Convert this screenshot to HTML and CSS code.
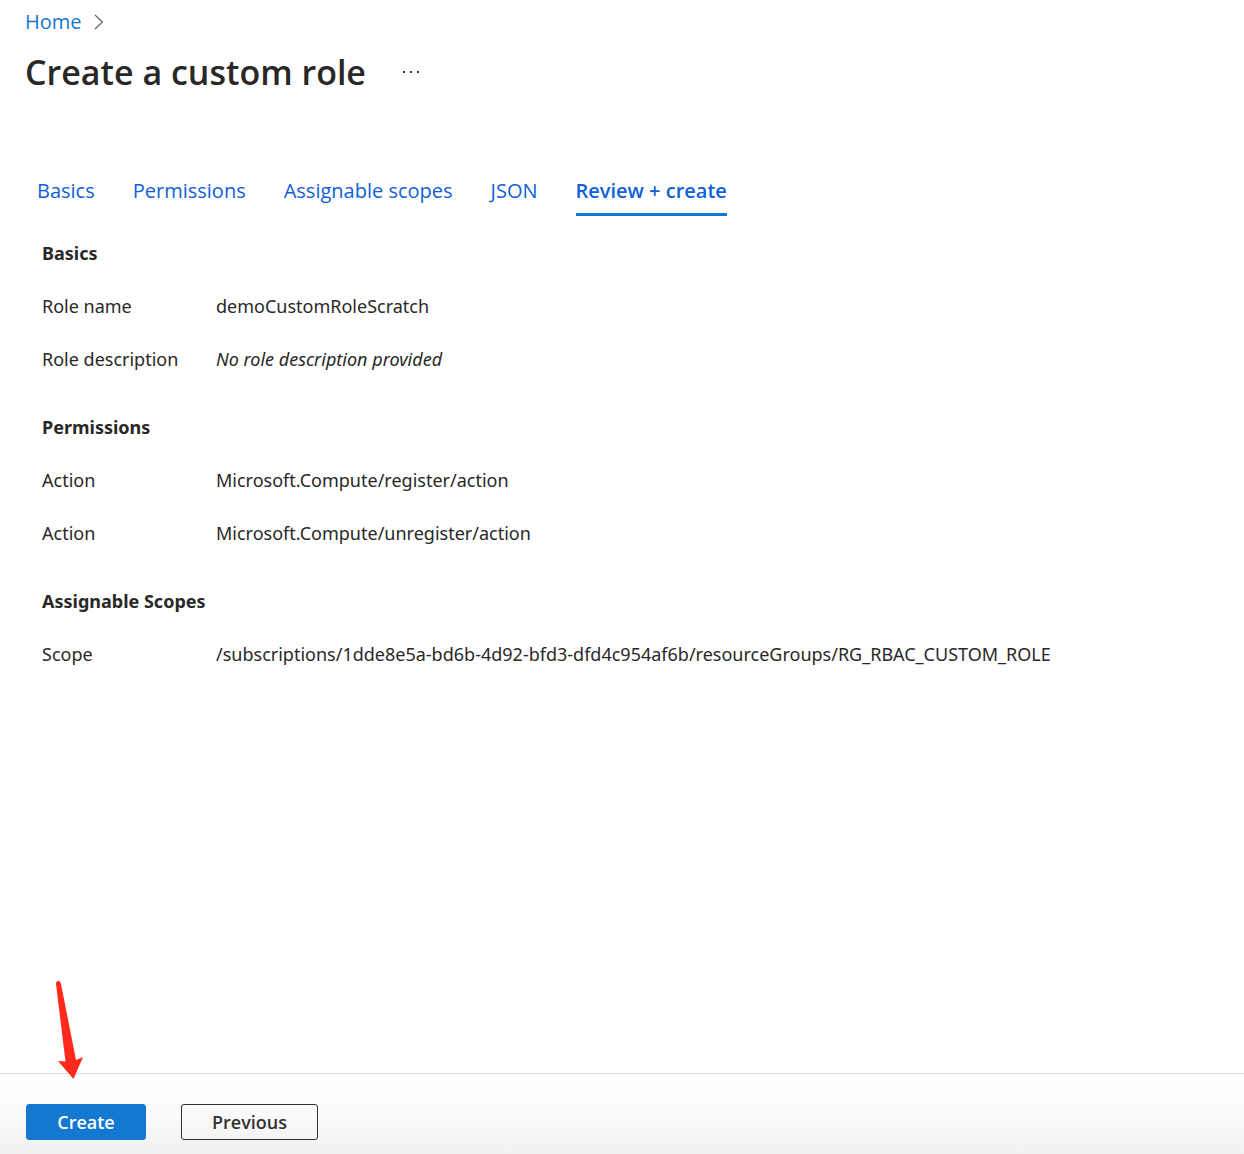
FILE: index.html
```html
<!DOCTYPE html>
<html lang="en">
<head>
<meta charset="utf-8">
<meta name="viewport" content="width=device-width, initial-scale=1">
<title>Create a custom role</title>
<link rel="stylesheet" href="styles.css">
</head>
<body>
<div class="page">
  <header class="header">
    <nav class="breadcrumb" aria-label="Breadcrumb">
      <a class="breadcrumb-link" href="#">Home</a>
      <svg class="chevron" width="10" height="16" viewBox="0 0 10 16" aria-hidden="true"><path d="M1 1L8.500 8L1 15" fill="none" stroke="#605e5c" stroke-width="1.100"/></svg>
    </nav>
    <div class="title-row">
      <h1 class="title">Create a custom role</h1>
      <button class="more" type="button" aria-label="More options">
        <svg width="18" height="4" viewBox="0 0 18 4" aria-hidden="true"><path d="M1 1h2v2h-2zM8 1h2v2h-2zM15 1h2v2h-2z" fill="#323130"/></svg>
      </button>
    </div>
  </header>
  <nav class="tabs" aria-label="Steps">
    <a class="tab" href="#">Basics</a>
    <a class="tab" href="#">Permissions</a>
    <a class="tab" href="#">Assignable scopes</a>
    <a class="tab" href="#">JSON</a>
    <a class="tab tab-active" href="#" aria-current="step">Review + create</a>
  </nav>
  <main class="summary">
    <section class="section">
      <h2 class="section-title">Basics</h2>
      <dl class="fields">
        <dt>Role name</dt><dd>demoCustomRoleScratch</dd>
        <dt>Role description</dt><dd class="empty">No role description provided</dd>
      </dl>
    </section>
    <section class="section">
      <h2 class="section-title">Permissions</h2>
      <dl class="fields">
        <dt>Action</dt><dd>Microsoft.Compute/register/action</dd>
        <dt>Action</dt><dd>Microsoft.Compute/unregister/action</dd>
      </dl>
    </section>
    <section class="section">
      <h2 class="section-title">Assignable Scopes</h2>
      <dl class="fields">
        <dt>Scope</dt><dd>/subscriptions/1dde8e5a-bd6b-4d92-bfd3-dfd4c954af6b/resourceGroups/RG_RBAC_CUSTOM_ROLE</dd>
      </dl>
    </section>
  </main>
  <footer class="footer">
    <button class="button button-primary" type="button">Create</button>
    <button class="button" type="button">Previous</button>
    <svg class="arrow" width="28" height="100" viewBox="0 0 28 100" aria-hidden="true"><path d="M1 4Q1 1 3.500 1Q5.500 1 6 4L21 80L28 77L18.500 99L3 81L10.500 81.500Z" fill="#ff2a1c"/></svg>
  </footer>
</div>
</body>
</html>
```
FILE: styles.css
```css
* {
  box-sizing: border-box;
}

body {
  margin: 0;
  background: #fff;
  color: #292827;
  font-family: "Open Sans", "Noto Sans", sans-serif;
  font-size: 18px;
  line-height: 24px;
}

.page {
  display: flex;
  flex-direction: column;
  min-height: 100vh;
}

.header {
  padding: 8px 25px 0;
}

.breadcrumb {
  display: flex;
  align-items: center;
  gap: 12px;
  font-size: 20px;
  line-height: 28px;
}

.breadcrumb-link {
  color: #1179d3;
  text-decoration: none;
}

.title-row {
  display: flex;
  align-items: center;
  gap: 36px;
  margin-top: 12px;
}

.title {
  margin: 0;
  font-size: 34px;
  font-weight: 600;
  line-height: 48px;
}

.more {
  display: flex;
  padding: 0;
  border: 0;
  background: none;
}

.tabs {
  display: flex;
  flex-wrap: wrap;
  gap: 38px;
  margin-top: 81px;
  padding: 0 37px;
  font-size: 20px;
  line-height: 28px;
}

.tab {
  padding-bottom: 8px;
  border-bottom: 3px solid transparent;
  color: #1160d7;
  text-decoration: none;
}

.tab-active {
  border-color: #1179d3;
  font-weight: 600;
}

.summary {
  display: flex;
  flex: 1;
  flex-direction: column;
  gap: 44px;
  padding: 25px 42px;
  font-family: "Noto Sans", "Open Sans", sans-serif;
}

.section-title {
  margin: 0;
  font-size: 18px;
  font-weight: 700;
}

.fields {
  display: grid;
  grid-template-columns: 146px 1fr;
  gap: 29px 28px;
  margin: 29px 0 0;
}

.fields dd {
  margin: 0;
  overflow-wrap: anywhere;
}

.fields .empty {
  font-style: italic;
}

.footer {
  position: relative;
  display: flex;
  gap: 35px;
  padding: 30px 26px 14px;
  border-top: 1px solid #dcdcdc;
  background: linear-gradient(#fff, #fbfbfb 50%, #f0f0f0);
}

.button {
  height: 36px;
  padding: 0 30px;
  border: 1px solid #323130;
  border-radius: 3px;
  background: transparent;
  color: #323130;
  font-family: inherit;
  font-size: 18px;
  font-weight: 600;
  line-height: 24px;
}

.button-primary {
  min-width: 120px;
  border-color: #1378d0;
  background: #1378d0;
  color: #fff;
}

.arrow {
  position: absolute;
  top: -94px;
  left: 55px;
}
```
